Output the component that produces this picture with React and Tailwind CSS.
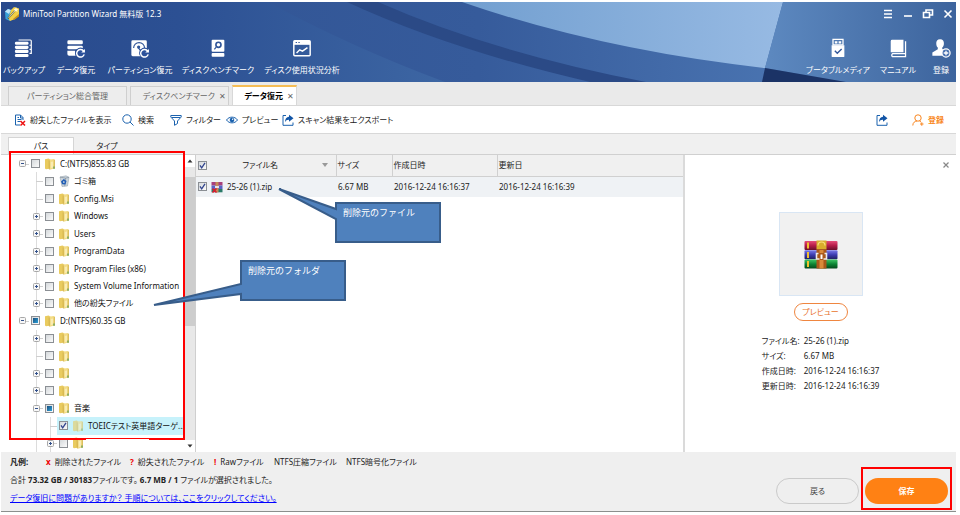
import React from "react";

const FONT = "font-['Noto_Sans','Noto_Sans_CJK_JP',sans-serif]";

function Folder({ dim }) {
  return (
    <svg viewBox="0 0 12 12" className={dim ? "h-3 w-3 shrink-0 opacity-60" : "h-3 w-3 shrink-0"} aria-hidden="true">
      <path d="M1 1.300 4.500.5 6.500 1.500v9L2 11.300 1 10.500Z" fill="#e9cb5f" />
      <path d="M4.800 1.800 9.500 1 10.800 2v8.300L5.800 11.700Z" fill="#f3dc86" />
      <path d="M4.800 1.800 5.600 2.500v9.200L4.800 10.900Z" fill="#c9a63c" />
      <path d="M6.800 4 9 3.600v6L6.800 10Z" fill="#f9ecb4" />
      <path d="M9.800 1.200 10.800 2v8.300l-1 .3Z" fill="#d6b650" />
      <path d="M9 8.500h2v2.300H9Z" fill="#8fae62" />
    </svg>
  );
}

function RecycleBin() {
  return (
    <svg viewBox="0 0 12 12" className="h-3 w-3 shrink-0" aria-hidden="true">
      <path d="M2 2 8 .8l3 1.500L9.500 11 4 11.500Z" fill="#c9d3db" stroke="#8d9aa5" strokeWidth=".5" />
      <path d="m2 2 5.500 1.200L11 2.300M7.500 3.200l-.8 8" fill="none" stroke="#75838f" strokeWidth=".6" />
      <path d="m3 6.500 2.800-2.500L8.500 6 7.500 9.500 4.200 9.300Z" fill="#1f5cb5" />
      <path d="m5 6.500 1-.5.800 1-.6 1H5.300Z" fill="#c9d3db" />
    </svg>
  );
}

function ArchiveIcon({ className }) {
  return (
    <svg viewBox="0 0 34 29" className={className} aria-hidden="true">
      <defs>
        <linearGradient id="bookRed" x1="0" y1="0" x2="0" y2="1"><stop stopColor="#e64c78" /><stop offset=".5" stopColor="#b51c49" /><stop offset="1" stopColor="#6a0f2c" /></linearGradient>
        <linearGradient id="bookBlue" x1="0" y1="0" x2="0" y2="1"><stop stopColor="#7b7bea" /><stop offset=".5" stopColor="#3c3cb0" /><stop offset="1" stopColor="#20205f" /></linearGradient>
        <linearGradient id="bookGreen" x1="0" y1="0" x2="0" y2="1"><stop stopColor="#3fc565" /><stop offset=".5" stopColor="#0c8434" /><stop offset="1" stopColor="#06461b" /></linearGradient>
      </defs>
      <rect x=".5" y="1" width="33" height="9" rx="1" fill="url(#bookRed)" />
      <rect x=".5" y="10.3" width="33" height="9" rx="1" fill="url(#bookBlue)" />
      <rect x=".5" y="19.6" width="33" height="9" rx="1" fill="url(#bookGreen)" />
      <path d="M3 2.500h2v6H3zM3 12h2v6H3zM3 21h2v6H3z" fill="#f2c12e" />
      <path d="M12.500.5h10v9h-10z" fill="#d9ad2b" />
      <path d="M14 5.500a3.500 3.500 0 0 1 7 0" fill="none" stroke="#f7df7a" strokeWidth="1.200" />
      <path d="M12.500 9.500h10v19h-10z" fill="#a9581a" />
      <path d="M17.500 10v3M17.500 20v8.500" stroke="#d98a3a" strokeWidth="4" />
      <path d="M14.500 13.500h-2v5.500h3M20.500 13.500h2v5.500h-3" fill="none" stroke="#ececec" strokeWidth="1.600" />
      <path d="M17.500 14.500v4.500" stroke="#fff" strokeWidth="2" />
    </svg>
  );
}

function ZipIcon() {
  return (
    <svg viewBox="0 0 12 12" className="h-3 w-3 shrink-0" aria-hidden="true">
      <path d="M.5 1h11v3.500H.5z" fill="#a8407c" />
      <path d="M.5 4.500h11V8H.5z" fill="#5a62c4" />
      <path d="M.5 8h11v3.300H.5z" fill="#2a7a68" />
      <path d="M4.500 1h3v10.300h-3z" fill="#c58a58" />
      <path d="M4 5h4v2H4z" fill="#e8dfe6" />
      <path d="m1.500 7.500 4 4m0-4-4 4" stroke="#e0182d" strokeWidth="1.500" />
    </svg>
  );
}

function AppLogo() {
  return (
    <svg viewBox="0 0 16 16" className="h-4 w-4" aria-hidden="true">
      <path d="M1 5.500 4 3l3 1 3-1.500L12 4v6l-6 5-4.500-2Z" fill="#38a0d8" />
      <path d="M1 5.500 4 3l3 1-2 4Z" fill="#bfe6f7" />
      <path d="m7 4 3-3 5 1.500V9l-4 4-5 2-1.500-2.500Z" fill="#f3cf45" />
      <path d="m9 13 6-5v2.500L10 14Z" fill="#c58e1d" />
      <path d="m4 12.500 8-9" stroke="#5b5b2c" strokeWidth="1.500" />
      <path d="m4.500 12 7-8" stroke="#fff" strokeWidth=".7" />
      <path d="m12 1 .7 1.700 1.800.3-1.300 1.200.3 1.800-1.500-.9-1.600.9.300-1.800L9.500 3l1.700-.3Z" fill="#fffbd6" />
    </svg>
  );
}

const restoreArc = (
  <g>
    <circle cx="16" cy="16" r="6" fill="#2c519b" />
    <path d="M19.500 14a4.200 4.200 0 1 0 .5 3.500" fill="none" stroke="#fff" strokeWidth="1.600" />
    <path d="M20.800 11.500v4h-4Z" fill="#fff" />
  </g>
);

const headerIcons = {
  backup: (
    <g fill="#fff"><rect x="1" y="3.500" width="15" height="3.500" rx="1.500" /><rect x="1" y="8" width="15" height="3.500" rx="1.500" /><rect x="1" y="12.500" width="15" height="3.500" rx="1.500" /><rect x="1" y="17" width="15" height="3.500" rx="1.500" /><path d="M5 1.700h13a1 1 0 0 1 1 1V17M17 7.500h2M17 12h2M17 16.500h2" fill="none" stroke="#fff" strokeWidth="1.300" /></g>
  ),
  data: (
    <g fill="#fff"><rect x="1.500" y="2" width="17" height="4.500" rx="1.500" /><rect x="1.500" y="8" width="17" height="4" rx="1.500" /><path d="M1.500 13.500H10l.5 5.500H3.500a2 2 0 0 1-2-2Z" />{restoreArc}</g>
  ),
  partition: (
    <g><rect x="1.500" y="2" width="17" height="17.500" rx="1.500" fill="#fff" /><path d="M4 10.500a6 6 0 0 1 12 0" fill="none" stroke="#31569a" strokeWidth="1.300" /><path d="m9 10 3.500 4.500" stroke="#31569a" strokeWidth="1.400" /><circle cx="9.500" cy="9.500" r="1.800" fill="#31569a" />{restoreArc}</g>
  ),
  bench: (
    <g><rect x="4" y="1.500" width="14" height="13" rx="1" fill="#fff" /><rect x="4" y="16" width="14" height="4" rx="1" fill="#fff" /><circle cx="11.500" cy="7" r="2.800" fill="none" stroke="#31569a" strokeWidth="1.800" /><path d="m7 12 2-2.500" stroke="#31569a" strokeWidth="1.300" /></g>
  ),
  usage: (
    <g fill="none" stroke="#fff" strokeWidth="1.600"><rect x="2" y="2.500" width="18" height="16.500" rx="1" /><path d="M2 2.500h18v4.500H2z" fill="#fff" stroke="none" /><path d="m5 16 3.500-3.500 3 1.500 5.500-4" /><path d="M4 4.500h1.500M7 4.500h1.500" stroke="#31569a" strokeWidth="1.200" /></g>
  ),
  usb: (
    <g><path d="M5.500 1h11v6h-11z" fill="none" stroke="#fff" strokeWidth="1.400" /><path d="M7.500 3h2.800v2.500H7.500zM11.700 3h2.800v2.500h-2.800z" fill="#fff" /><path d="M4 7.500h14v12a1 1 0 0 1-1 1H5a1 1 0 0 1-1-1Z" fill="#fff" /><path d="m7.500 13.500 2.700 2.700L15 11.500" fill="none" stroke="#31569a" strokeWidth="1.500" /></g>
  ),
  manual: (
    <g><path d="M4.500 1.500H17v13.800H3V3a1.500 1.500 0 0 1 1.500-1.500Z" fill="#fff" /><path d="M19.300 3v17H5a1.900 1.900 0 0 1 0-3.200h14" fill="none" stroke="#fff" strokeWidth="1.400" /></g>
  ),
  register: (
    <g><path d="M10 1c3 0 4.500 2 4.200 5-.2 2-1 3.200-1.800 4v1.500l3 1.500v6H1.500v-3.500L7.500 12v-2C6.500 9.200 6 8 5.800 6 5.500 3 7 1 10 1Z" fill="#fff" /><circle cx="16.500" cy="16" r="4.500" fill="#4a72b0" stroke="#fff" strokeWidth="1.400" /><path d="M16.500 13.500v5M14 16h5" stroke="#fff" strokeWidth="1.400" /></g>
  ),
};

function HeaderButton({ icon, label, width }) {
  return (
    <button type="button" className={`flex flex-col items-center gap-1 text-white ${width}`}>
      <svg viewBox="0 0 22 21" className="h-5 w-5" aria-hidden="true">{headerIcons[icon]}</svg>
      <span className="whitespace-nowrap leading-4">{label}</span>
    </button>
  );
}

function ExportIcon() {
  return (
    <svg viewBox="0 0 12 12" className="h-3 w-3" aria-hidden="true">
      <path d="M4 1.500H1v9.800h10V8.500" fill="none" stroke="#1b62ae" strokeWidth="1" />
      <path d="M7 .8 11.500 4.300 7 7.800V5.800C5 5.700 3.800 6.500 3 8.300 3 5 4.500 3 7 2.800Z" fill="#1255a6" />
    </svg>
  );
}

function Tool({ icon, label, width }) {
  return (
    <button type="button" className={`flex items-center gap-1 whitespace-nowrap ${width}`}>
      {icon}
      <span>{label}</span>
    </button>
  );
}

function Check({ state, label }) {
  return (
    <span className="relative flex h-[9px] w-[9px] shrink-0">
      <input
        type="checkbox"
        aria-label={label}
        defaultChecked={state === "on"}
        className="h-[9px] w-[9px] appearance-none border border-[#8b8f94] bg-linear-to-br from-[#d5d9dc] to-[#fbfbfb]"
      />
      {state === "on" && (
        <svg viewBox="0 0 9 9" className="pointer-events-none absolute inset-0 h-[9px] w-[9px]" aria-hidden="true">
          <path d="m2 4.300 1.700 2.500L7 1.800" fill="none" stroke="#32458f" strokeWidth="1.300" />
        </svg>
      )}
      {state === "mixed" && <span className="pointer-events-none absolute inset-0.5 bg-linear-to-br from-[#1b4f7d] to-[#2ba3dc]" />}
    </span>
  );
}

const tree = [
  { level: 0, toggle: "-", text: "C:(NTFS)855.83 GB" },
  { level: 1, text: "ゴミ箱", bin: true },
  { level: 1, text: "Config.Msi" },
  { level: 1, toggle: "+", text: "Windows" },
  { level: 1, toggle: "+", text: "Users" },
  { level: 1, toggle: "+", text: "ProgramData" },
  { level: 1, toggle: "+", text: "Program Files (x86)" },
  { level: 1, toggle: "+", text: "System Volume Information" },
  { level: 1, toggle: "+", text: "他の紛失ファイル" },
  { level: 0, toggle: "-", text: "D:(NTFS)60.35 GB", state: "mixed" },
  { level: 1, toggle: "+", text: "" },
  { level: 1, text: "" },
  { level: 1, toggle: "+", text: "" },
  { level: 1, toggle: "+", text: "" },
  { level: 1, toggle: "-", text: "音楽", state: "mixed" },
  { level: 2, text: "TOEICテスト英単語ターゲ...", state: "on", selected: true },
  { level: 2, toggle: "+", text: "" },
];

function Guide() {
  return <span className="flex w-[14px] shrink-0 justify-center self-stretch"><span className="w-px bg-[#dcdcdc]" /></span>;
}

function TreeRow({ row }) {
  return (
    <li className="flex min-h-0 min-w-0 items-center pl-[14px]">
      {row.level > 0 && <span className="w-[14px] shrink-0" />}
      {row.level > 1 && <Guide />}
      <span className="relative flex w-[14px] shrink-0 items-center justify-center self-stretch">
        {row.level > 0 && <span className="absolute inset-y-0 left-[7px] w-px bg-[#dcdcdc]" />}
        <span className="absolute right-0 top-1/2 h-px w-[7px] bg-[#cfcfcf]" />
        {row.toggle && (
          <svg viewBox="0 0 7 7" className="relative h-[7px] w-[7px]" aria-hidden="true">
            <rect x=".5" y=".5" width="6" height="6" rx="1" fill="#f7f7f7" stroke="#a8a8a8" />
            <path d={row.toggle === "+" ? "M2 3.500h3M3.500 2v3" : "M2 3.500h3"} stroke="#33518c" />
          </svg>
        )}
      </span>
      <span className={row.selected ? "flex min-w-0 flex-1 items-center gap-1 self-stretch bg-[#c7f2fb] pl-0.5" : "flex min-w-0 flex-1 items-center gap-1 pl-0.5"}>
        <Check state={row.state} label={row.text || "フォルダ"} />
        {row.bin ? <RecycleBin /> : <Folder dim={row.selected} />}
        <span className="whitespace-nowrap leading-4 text-[#111]">{row.text}</span>
      </span>
    </li>
  );
}

const details = [
  ["ファイル名:", "25-26 (1).zip"],
  ["サイズ:", "6.67 MB"],
  ["作成日時:", "2016-12-24 16:16:37"],
  ["更新日時:", "2016-12-24 16:16:39"],
];

export default function App() {
  return (
    <div className={`relative bg-white pb-[3px] pl-px pr-1 pt-0.5 text-[8px] text-[#222] [font-feature-settings:'palt'] ${FONT}`}>
      <header className="relative h-20 bg-[#2c519b]">
        <svg viewBox="0 0 955 80" preserveAspectRatio="none" className="absolute inset-0 h-full w-full" aria-hidden="true">
          <defs>
            <linearGradient id="left" x1="0" x2="1"><stop stopColor="#294a8c" /><stop offset=".4" stopColor="#2c5093" /><stop offset="1" stopColor="#3d66a3" /></linearGradient>
            <linearGradient id="middle" x1="0" x2="1"><stop stopColor="#2f5192" /><stop offset=".5" stopColor="#365b9b" /><stop offset="1" stopColor="#5582bd" /></linearGradient>
            <linearGradient id="beam" x1="0" x2="1"><stop stopColor="#729fd0" /><stop offset="1" stopColor="#97bae3" /></linearGradient>
            <linearGradient id="right" x1="0" x2="1"><stop stopColor="#5d89c0" /><stop offset="1" stopColor="#3d649d" /></linearGradient>
          </defs>
          <rect width="955" height="80" fill="url(#middle)" />
          <path d="M0 0H267Q350 45 444 80H0Z" fill="url(#left)" />
          <path d="M346 0H377Q490 50 645 80H589Q450 48 346 0Z" fill="#2b4a86" />
          <path d="M461 0H782L764 66Q600 48 461 0Z" fill="url(#beam)" />
          <path d="M782 0H955V80H845L764 66Z" fill="url(#right)" />
          <path d="M764 66 845 80H761Z" fill="#1b3366" />
        </svg>
        <div className="relative flex h-6 items-center justify-between pl-[3px] pr-0.5">
          <div className="flex items-center gap-[3px] text-white"><AppLogo /><h1>MiniTool Partition Wizard 無料版 12.3</h1></div>
          <div className="flex items-center gap-2 text-white">
            {[
              ["メニュー", "M2 2.500h8M2 6h8M2 9.500h8"],
              ["最小化", "M2 8h8"],
              ["元に戻す", "M1.500 4.500h6v5h-6zM4 4V2h6.500v5H8"],
              ["閉じる", "m2.500 2.500 7 7m0-7-7 7"],
            ].map(([name, d]) => (
              <button key={name} type="button" aria-label={name}>
                <svg viewBox="0 0 12 12" className="h-3 w-3" aria-hidden="true"><path d={d} fill="none" stroke="#fff" strokeWidth="1.600" /></svg>
              </button>
            ))}
          </div>
        </div>
        <div className="relative flex justify-between pt-3">
          <div className="flex pl-px">
            <HeaderButton icon="backup" label="バックアップ" width="w-11" />
            <HeaderButton icon="data" label="データ復元" width="w-15" />
            <HeaderButton icon="partition" label="パーティション復元" width="w-17" />
            <HeaderButton icon="bench" label="ディスクベンチマーク" width="w-22" />
            <HeaderButton icon="usage" label="ディスク使用状況分析" width="w-20" />
          </div>
          <div className="flex">
            <HeaderButton icon="usb" label="ブータブルメディア" width="w-16" />
            <HeaderButton icon="manual" label="マニュアル" width="w-14" />
            <HeaderButton icon="register" label="登録" width="w-[30px]" />
          </div>
        </div>
      </header>

      <nav className="flex h-6 items-end gap-[3px] border-b border-[#d8d8d8] bg-[#eaeaea] pl-[7px] text-[#666]">
        <button type="button" className="h-[19px] w-[119px] border border-b-0 border-[#cfcfcf] bg-[#ededed] text-center">パーティション総合管理</button>
        <button type="button" className="flex h-[19px] w-[99px] items-center justify-end gap-1 border border-b-0 border-[#cfcfcf] bg-[#ededed] pr-0.5">ディスクベンチマーク<span>✕</span></button>
        <button type="button" className="flex h-5 w-[65px] items-center justify-end gap-1 border border-b-0 border-t-2 border-[#d8d8d8] border-t-[#f5bd55] bg-white pr-0.5 font-bold text-black">データ復元<span className="font-normal text-[#666]">✕</span></button>
      </nav>

      <div className="flex h-7 items-center justify-between border-b border-[#d8d8d8] bg-white pl-[13px] pr-3">
        <div className="flex">
          <Tool width="w-27" label="紛失したファイルを表示" icon={<svg viewBox="0 0 12 12" className="h-3 w-3" aria-hidden="true"><path d="M6 11H1.500V1h5L9 3.500V6M6.500 1v3H9M3.500 5.500h4M3.500 7.500h3M3.500 3.500h1.500" fill="none" stroke="#1b62ae" /><path d="m6.500 7 4.500 4.500m0-4.500-4.500 4.500" stroke="#e11" strokeWidth="1.500" /></svg>} />
          <Tool width="w-12" label="検索" icon={<svg viewBox="0 0 12 12" className="h-3 w-3" aria-hidden="true"><circle cx="5" cy="5" r="4.200" fill="none" stroke="#1b62ae" /><path d="m8 8 3.500 3.500" stroke="#1b62ae" /></svg>} />
          <Tool width="w-14" label="フィルター" icon={<svg viewBox="0 0 12 12" className="h-3 w-3" aria-hidden="true"><path d="M.8 1.500h10.400v1.500L7.500 7v2.500l-3 1.800V7L.8 3ZM2 3.500h8" fill="none" stroke="#1b62ae" /></svg>} />
          <Tool width="w-14" label="プレビュー" icon={<svg viewBox="0 0 12 12" className="h-3 w-3" aria-hidden="true"><path d="M.5 6C3 2.200 9 2.200 11.500 6 9 9.800 3 9.800.5 6Z" fill="none" stroke="#1b62ae" /><circle cx="6" cy="6" r="2.300" fill="#1b62ae" /><circle cx="6.600" cy="5.300" r=".7" fill="#fff" /></svg>} />
          <Tool width="" label="スキャン結果をエクスポート" icon={<ExportIcon />} />
        </div>
        <div className="flex items-center gap-6">
          <button type="button" aria-label="エクスポート"><ExportIcon /></button>
          <button type="button" className="flex items-center gap-1 font-bold text-[#f98620]"><svg viewBox="0 0 12 12" className="h-3 w-3" aria-hidden="true"><circle cx="6" cy="4" r="3.200" fill="none" stroke="#f98620" /><path d="M.8 11.500C.8 8.500 3 7.200 5 7M7.500 7l1.500 1M8 10h3.500M9.800 8.300v3.500" fill="none" stroke="#f98620" /></svg>登録</button>
        </div>
      </div>

      <div className="flex h-[21px] items-end border-b border-[#d0d0d0] bg-[#f0f0f0] pl-[7px]">
        <button type="button" className="h-[17px] w-[66px] border border-b-0 border-[#d5d5d5] bg-white">パス</button>
        <button type="button" className="h-[17px] w-[66px]">タイプ</button>
      </div>

      <main className="flex h-[297px] bg-white">
        <div className="flex w-[195px] shrink-0">
          <ul className="grid min-w-0 flex-1 auto-rows-fr grid-cols-[minmax(0,1fr)]">
            {tree.map((row, i) => <TreeRow key={i} row={row} />)}
          </ul>
          <div className="flex w-3 shrink-0 flex-col items-center border-r border-[#cfcfcf] bg-[#e8e8e8]">
            <span className="flex h-3 w-full items-center justify-center bg-white"><svg viewBox="0 0 6 4" className="h-1 w-1.5" aria-hidden="true"><path d="M.5 3.500 3 .5l2.500 3Z" fill="#333" /></svg></span>
            <span className="mb-auto mt-2.5 h-[149px] w-full bg-[#cdcdcd]" />
            <span className="flex h-3 w-full items-center justify-center bg-white"><svg viewBox="0 0 6 4" className="h-1 w-1.5" aria-hidden="true"><path d="M.5.5h5L3 3.500Z" fill="#333" /></svg></span>
          </div>
        </div>

        <div className="min-w-0 flex-1">
          <table className="w-full table-fixed border-collapse text-left">
            <colgroup><col className="w-[140px]" /><col className="w-[56px]" /><col className="w-[105px]" /><col /></colgroup>
            <thead>
              <tr className="h-[21px] border-b border-[#d0d0d0] bg-[#f0f0f0]">
                <th className="border-r border-[#d0d0d0] p-0 font-normal"><span className="flex items-center justify-between pl-0.5 pr-2"><Check state="on" label="すべて選択" /><span className="pr-2">ファイル名</span><svg viewBox="0 0 6 4" className="h-1 w-1.5" aria-hidden="true"><path d="M0 0h6L3 4Z" fill="#999" /></svg></span></th>
                <th className="border-r border-[#d0d0d0] p-0 pl-px font-normal">サイズ</th>
                <th className="border-r border-[#d0d0d0] p-0 pl-px font-normal">作成日時</th>
                <th className="p-0 pl-px font-normal">更新日</th>
              </tr>
            </thead>
            <tbody>
              <tr className="h-[21px] bg-[#eff2f5]">
                <td className="p-0"><span className="flex items-center gap-1 pl-0.5"><Check state="on" label="25-26 (1).zip" /><ZipIcon /><span>25-26 (1).zip</span></span></td>
                <td className="p-0 pl-0.5">6.67 MB</td>
                <td className="p-0 pl-0.5">2016-12-24 16:16:37</td>
                <td className="p-0 pl-0.5">2016-12-24 16:16:39</td>
              </tr>
            </tbody>
          </table>
        </div>

        <aside className="flex w-[273px] shrink-0 flex-col items-center border-l-2 border-[#dadada] bg-white">
          <button type="button" aria-label="プレビューを閉じる" className="mr-1.5 mt-1.5 self-end"><svg viewBox="0 0 8 8" className="h-2 w-2" aria-hidden="true"><path d="m1.500 1.500 5 5m0-5-5 5" stroke="#888" strokeWidth="1.200" /></svg></button>
          <div className="mt-[43px] flex h-[84px] w-[84px] items-center justify-center border border-[#d9e6f4] bg-[#f1f1f1]"><ArchiveIcon className="h-[29px] w-[34px]" /></div>
          <button type="button" className="mt-[7px] h-[18px] w-[54px] rounded-full border border-[#ef8640] leading-4 text-[#e8732c]">プレビュー</button>
          <dl className="mt-3 grid grid-cols-[42px_auto] whitespace-nowrap leading-[15px]">
            {details.map(([k, v]) => (<React.Fragment key={k}><dt>{k}</dt><dd>{v}</dd></React.Fragment>))}
          </dl>
        </aside>
      </main>

      <footer className="flex h-[60px] justify-between border-b border-[#8b8f8d] bg-[#efefef] pl-[9px] pr-2">
        <div className="flex flex-col items-start whitespace-nowrap pt-px leading-[18px]">
          <div className="flex">
            <b className="w-9">凡例:</b>
            <span className="w-21"><b className="mr-1 text-[#e00]">x</b>削除されたファイル</span>
            <span className="w-21"><b className="mr-1 text-[#e00]">?</b>紛失されたファイル</span>
            <span className="w-15"><b className="mr-1 text-[#e00]">!</b>Rawファイル</span>
            <span className="w-18">NTFS圧縮ファイル</span>
            <span>NTFS暗号化ファイル</span>
          </div>
          <p>合計 <b>73.32 GB / 30183</b>ファイルです。 <b>6.7 MB / 1</b> ファイルが選択されました。</p>
          <a href="#help" className="text-[#00f] underline">データ復旧に問題がありますか？ 手順については、ここをクリックしてください。</a>
        </div>
        <div className="flex gap-1.5 pt-[26px]">
          <button type="button" className="h-[26px] w-[83px] rounded-full border border-[#cacaca] text-[#444]">戻る</button>
          <button type="button" className="h-[26px] w-[83px] rounded-full bg-[#ff8114] font-bold text-white">保存</button>
        </div>
      </footer>

      <div className="pointer-events-none absolute left-[9px] top-[151px] h-[289px] w-[176px] border-2 border-[#f00]">
        <div className="absolute -bottom-0.5 left-[75px] h-px w-[63px] bg-white" />
      </div>
      <div className="pointer-events-none absolute right-2 top-[467px] h-[43px] w-[91px] border-2 border-[#f00]" />

      <div className="absolute left-[335px] top-[202px] h-[41px] w-[106px] text-[9px] text-white [font-feature-settings:normal]">
        <svg viewBox="-60 -16 166 57" className="absolute bottom-0 right-0 h-[57px] w-[166px]" aria-hidden="true">
          <path d="M1 1H105V40H1V17L-56-13 1 7Z" fill="#4f81bd" stroke="#385d8a" strokeWidth="2" />
        </svg>
        <p className="relative px-2 pt-1 leading-[14px]">削除元のファイル</p>
      </div>
      <div className="absolute left-[240px] top-[260px] h-[41px] w-[106px] text-[9px] text-white [font-feature-settings:normal]">
        <svg viewBox="-90 0 196 50" className="absolute right-0 top-0 h-[50px] w-[196px]" aria-hidden="true">
          <path d="M1 1H105V40H1V34L-86 45 1 24Z" fill="#4f81bd" stroke="#385d8a" strokeWidth="2" />
        </svg>
        <p className="relative px-2 pt-1 leading-[14px]">削除元のフォルダ</p>
      </div>
    </div>
  );
}
